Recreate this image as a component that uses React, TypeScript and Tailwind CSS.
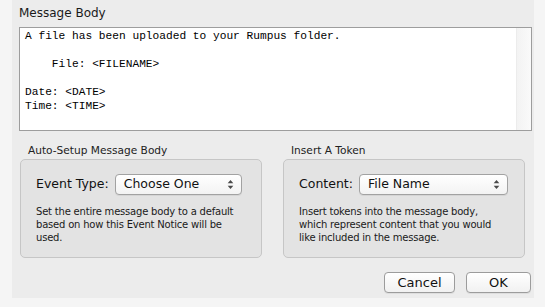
import { ReactNode } from "react";

const bodyLines = [
  "A file has been uploaded to your Rumpus folder.",
  "",
  "    File: <FILENAME>",
  "",
  "Date: <DATE>",
  "Time: <TIME>",
];

function Stepper() {
  return (
    <svg width="7" height="11" viewBox="0 0 7 11" className="shrink-0">
      <path d="M3.5 1 L6.3 4.3 L0.7 4.3 Z" fill="#4a4a4a" />
      <path d="M3.5 10 L6.3 6.7 L0.7 6.7 Z" fill="#4a4a4a" />
    </svg>
  );
}

function PopUp({ value, width }: { value: string; width: string }) {
  return (
    <div
      className={`flex h-[21px] items-center justify-between rounded-[4px] border border-[#a2a2a2] bg-gradient-to-b from-white to-[#f3f3f3] pl-[8px] pr-[7px] text-[12.5px] text-[#111] shadow-[0_1px_0_rgba(0,0,0,0.06)] ${width}`}
    >
      <span>{value}</span>
      <Stepper />
    </div>
  );
}

function GroupBox({ title, children }: { title: string; children: ReactNode }) {
  return (
    <div className="flex flex-col">
      <div className="pl-[8px] text-[10.6px] leading-[14px] text-[#222]">{title}</div>
      <div className="mt-[2px] h-[99px] rounded-[5px] border border-[#c6c6c6] bg-[#e3e3e3] px-[15px] pt-[14px]">
        {children}
      </div>
    </div>
  );
}

function PushButton({ label, width }: { label: string; width: string }) {
  return (
    <button
      type="button"
      className={`flex h-[21px] items-center justify-center rounded-[4px] border border-[#9c9c9c] bg-gradient-to-b from-white to-[#f1f1f1] text-[13px] text-[#111] shadow-[0_1px_0_rgba(0,0,0,0.06)] ${width}`}
    >
      {label}
    </button>
  );
}

export default function App() {
  return (
    <div className="h-[307px] w-[545px] overflow-hidden bg-[#f5f5f5] font-['DejaVu_Sans',sans-serif]">
      <div className="ml-[12px] h-[298px] w-[522px] bg-[#ececec] pt-[6px]">
        <div className="pl-[7px] text-[12px] leading-[15px] text-[#1a1a1a]">Message Body</div>

        <div className="ml-[7px] mt-[6px] flex h-[104px] w-[513px] border border-[#9d9d9d] bg-white">
          <div className="flex-1 whitespace-pre pl-[5px] pt-[1px] font-['Liberation_Mono',monospace] text-[11.2px] leading-[14px] text-black">
            {bodyLines.map((line, i) => (
              <div key={i} className="h-[14px]">
                {line}
              </div>
            ))}
          </div>
          <div className="w-[15px] border-l border-[#ececec] bg-gradient-to-r from-[#f3f3f3] to-[#fafafa]" />
        </div>

        <div className="mt-[12px] flex gap-[21px] pl-[8px]">
          <div className="w-[242px]">
            <GroupBox title="Auto-Setup Message Body">
              <div className="flex items-center gap-[6px]">
                <span className="text-[12.5px] text-[#111]">Event Type:</span>
                <PopUp value="Choose One" width="w-[127px]" />
              </div>
              <p className="mt-[10px] text-[10px] leading-[13px] tracking-[-0.2px] text-[#1a1a1a]">
                Set the entire message body to a default based on how this Event Notice will be used.
              </p>
            </GroupBox>
          </div>
          <div className="w-[242px]">
            <GroupBox title="Insert A Token">
              <div className="flex items-center gap-[6px]">
                <span className="text-[12.5px] text-[#111]">Content:</span>
                <PopUp value="File Name" width="w-[149px]" />
              </div>
              <p className="mt-[10px] text-[10px] leading-[13px] tracking-[-0.2px] text-[#1a1a1a]">
                Insert tokens into the message body, which represent content that you would like included in the message.
              </p>
            </GroupBox>
          </div>
        </div>

        <div className="mt-[14px] flex justify-end gap-[11px] pr-[3px]">
          <PushButton label="Cancel" width="w-[71px]" />
          <PushButton label="OK" width="w-[65px]" />
        </div>
      </div>
    </div>
  );
}
